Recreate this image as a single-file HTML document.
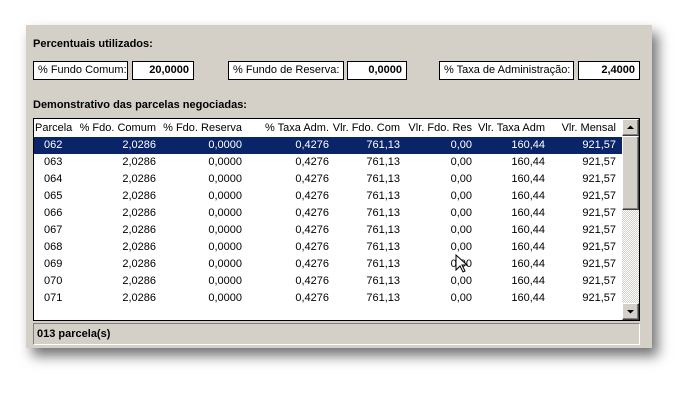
<!DOCTYPE html>
<html><head><meta charset="utf-8"><style>
*{margin:0;padding:0;box-sizing:border-box}
body{width:687px;height:414px;background:#fff;position:relative;overflow:hidden;font-family:"Liberation Sans",Arial,sans-serif;font-size:11px;color:#000}
.panel{position:absolute;left:26px;top:25px;width:626px;height:323px;background:#d4d0c8;box-shadow:6px 8px 12px rgba(0,0,0,.55)}
.a{position:absolute}
.b{position:absolute;background:#fff;border:1px solid #000;height:19px;line-height:17px;padding:0 4px;white-space:nowrap}
.bold{font-weight:bold}
.tbl{position:absolute;left:33px;top:118px;width:607px;height:203px;background:#fff;border:1px solid #000;overflow:hidden}
.row{position:absolute;left:0;width:588px;height:17px;line-height:17px}
.row span{position:absolute;top:0;white-space:nowrap}
.sel{background:#0a246a;color:#fff}
.sb{position:absolute;left:588px;top:0;width:17px;height:201px;background:repeating-conic-gradient(#fff 0 25%,#d4d0c8 0 50%) 0 0/2px 2px}
.btn{position:absolute;left:0;width:17px;background:#d4d0c8;border:1px solid;border-color:#fff #404040 #404040 #fff;box-shadow:inset -1px -1px #808080}
.status{position:absolute;left:33px;top:323px;width:607px;height:22px;border:1px solid;border-color:#808080 #fff #fff #808080;line-height:20px;padding-left:3px;font-weight:bold}
</style></head><body>
<div class="panel"></div>
<div class="a bold" style="left:33px;top:38px">Percentuais utilizados:</div>
<div class="b" style="left:33px;top:61px;width:95px">% Fundo Comum:</div>
<div class="b bold" style="left:132px;top:61px;width:62px;text-align:right">20,0000</div>
<div class="b" style="left:228px;top:61px;width:116px">% Fundo de Reserva:</div>
<div class="b bold" style="left:347px;top:61px;width:60px;text-align:right">0,0000</div>
<div class="b" style="left:439px;top:61px;width:135px">% Taxa de Administração:</div>
<div class="b bold" style="left:578px;top:61px;width:62px;text-align:right">2,4000</div>
<div class="a bold" style="left:33px;top:99px">Demonstrativo das parcelas negociadas:</div>
<div class="tbl">
<div class="row" style="top:1px"><span style="left:1px">Parcela</span><span style="right:466px">% Fdo. Comum</span><span style="right:380px">% Fdo. Reserva</span><span style="right:293px">% Taxa Adm.</span><span style="right:222px">Vlr. Fdo. Com</span><span style="right:150px">Vlr. Fdo. Res</span><span style="right:77px">Vlr. Taxa Adm</span><span style="right:6px">Vlr. Mensal</span></div>
<div id="rows"></div>
<div class="sb">
<div class="btn" style="top:0;height:17px"><svg width="15" height="15" style="position:absolute;left:0;top:0"><path d="M4 9h7L7.5 5.5z" fill="#000"/></svg></div>
<div class="btn" style="top:17px;height:74px"></div>
<div class="btn" style="top:184px;height:17px"><svg width="15" height="15" style="position:absolute;left:0;top:0"><path d="M4 6h7L7.5 9.5z" fill="#000"/></svg></div>
</div>
</div>
<div class="status">013 parcela(s)</div>
<svg class="a" style="left:455px;top:254px" width="14" height="20"><path d="M1 1v15l4-4 3 6 2-1-3-6h5z" fill="#fff" stroke="#000" stroke-width="1"/></svg>
<script>
var h='';for(var i=0;i<10;i++){var n='0'+(62+i);h+='<div class="row'+(i==0?' sel':'')+'" style="top:'+(18+i*17)+'px"><span style="left:10px">'+n+'</span><span style="right:466px">2,0286</span><span style="right:380px">0,0000</span><span style="right:293px">0,4276</span><span style="right:222px">761,13</span><span style="right:150px">0,00</span><span style="right:77px">160,44</span><span style="right:6px">921,57</span></div>';}
document.getElementById('rows').innerHTML=h;
</script>
</body></html>
